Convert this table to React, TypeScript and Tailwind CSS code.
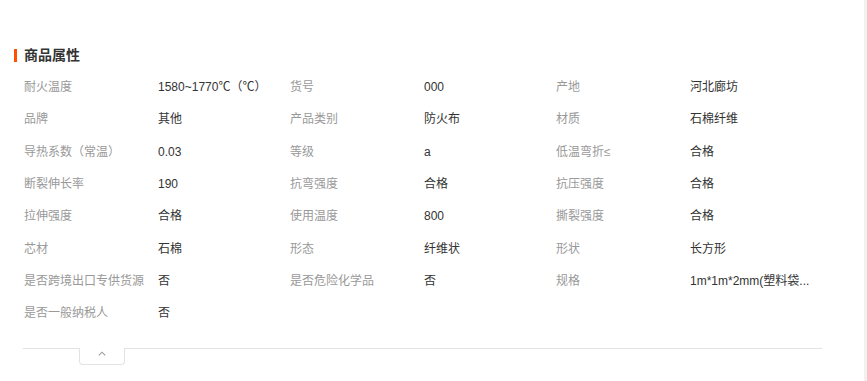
import React from "react";

const rows: [string, string][][] = [
  [["耐火温度", "1580~1770℃（℃）"], ["货号", "000"], ["产地", "河北廊坊"]],
  [["品牌", "其他"], ["产品类别", "防火布"], ["材质", "石棉纤维"]],
  [["导热系数（常温）", "0.03"], ["等级", "a"], ["低温弯折≤", "合格"]],
  [["断裂伸长率", "190"], ["抗弯强度", "合格"], ["抗压强度", "合格"]],
  [["拉伸强度", "合格"], ["使用温度", "800"], ["撕裂强度", "合格"]],
  [["芯材", "石棉"], ["形态", "纤维状"], ["形状", "长方形"]],
  [["是否跨境出口专供货源", "否"], ["是否危险化学品", "否"], ["规格", "1m*1m*2mm(塑料袋..."]],
  [["是否一般纳税人", "否"]],
];

export default function App() {
  return (
    <div
      className="flex w-[867px] h-[381px] bg-[#f1f1f1]"
      style={{ fontFamily: '"Liberation Sans", "Noto Sans CJK SC", sans-serif' }}
    >
      <div className="w-[864px] h-full bg-white pt-[48px]">
        {/* title */}
        <div className="flex items-center h-[14px] pl-[14px]">
          <span className="w-[3px] h-[13px] bg-[#ff5000]" />
          <span className="ml-[7px] text-[14px] leading-[14px] font-bold text-[#333]">商品属性</span>
        </div>

        {/* attributes */}
        <div className="mt-[9px] pl-[24px]">
          {rows.map((row, i) => (
            <div key={i} className="grid grid-cols-[134px_132px_134px_132px_134px_132px] h-[32.3px] items-center text-[12px] leading-[16px]">
              {row.map(([k, v]) => (
                <React.Fragment key={k}>
                  <span className="text-[#999] whitespace-nowrap">{k}</span>
                  <span className="text-[#333] whitespace-nowrap">{v}</span>
                </React.Fragment>
              ))}
            </div>
          ))}
        </div>

        {/* divider + collapse tab */}
        <div className="mt-[19px] ml-[23px] w-[799px] border-t border-[#e3e3e3]" />
        <div className="ml-[79px] -mt-px w-[46px] h-[17px] bg-white border border-t-0 border-[#e3e3e3] rounded-b-[4px] flex justify-center pt-[3px]">
          <svg width="8" height="5" viewBox="0 0 8 5" fill="none">
            <path d="M0.8 4.3 L4 1.2 L7.2 4.3" stroke="#9a9a9a" strokeWidth="1.1" />
          </svg>
        </div>
      </div>
    </div>
  );
}
